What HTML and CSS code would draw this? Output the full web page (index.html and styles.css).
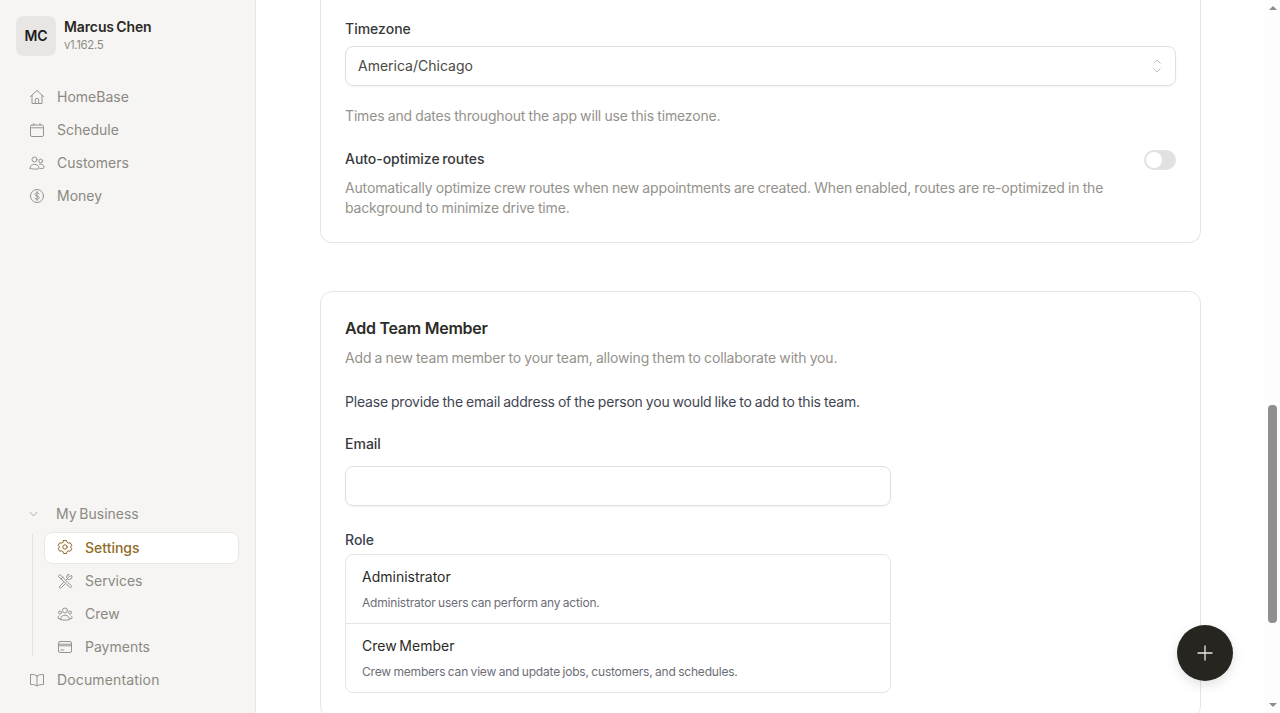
FILE: index.html
```html
<!DOCTYPE html>
<html lang="en">
<head>
<meta charset="utf-8">
<title>Settings</title>
<link rel="stylesheet" href="styles.css">
</head>
<body>
<div class="app">
  <aside class="sidebar">
    <div class="profile">
      <div class="avatar">MC</div>
      <div class="who">
        <div class="name">Marcus Chen</div>
        <div class="version">v1.162.5</div>
      </div>
    </div>
    <nav class="nav">
      <a class="item">
        <svg class="ic" viewBox="0 0 16 16"><path d="M1.5 7.5 8 1.5l6.5 6M3 6.5v8h10v-8M6.3 14.5V11a1.7 1.7 0 0 1 3.400 0v3.500"/></svg>
        <span>HomeBase</span>
      </a>
      <a class="item">
        <svg class="ic" viewBox="0 0 16 16"><rect x="1.5" y="3" width="13" height="11.5" rx="1.5"/><path d="M1.5 5.800h13M5 1.500V3M11 1.500V3"/></svg>
        <span>Schedule</span>
      </a>
      <a class="item">
        <svg class="ic" viewBox="0 0 16 16"><circle cx="5.5" cy="4.5" r="2.5"/><circle cx="11.7" cy="6" r="1.9"/><path d="M1 13.5c0-2.800 2-4.200 4.500-4.200S10 10.700 10 13.500c0 .8-9 .8-9 0ZM10.500 9.200c2.500-.5 4.500.8 4.500 3.300 0 1-1 1-4 1"/></svg>
        <span>Customers</span>
      </a>
      <a class="item">
        <svg class="ic" viewBox="0 0 16 16"><circle cx="8" cy="8" r="6.5"/><path d="M10 5.800C9.500 5 8.800 4.800 8 4.800c-1.200 0-2 .6-2 1.600 0 2.200 4.200 1 4.200 3.200 0 1-.9 1.600-2.200 1.600-.9 0-1.700-.4-2.200-1.100M8 3.500v9"/></svg>
        <span>Money</span>
      </a>
    </nav>
    <div class="spacer"></div>
    <div class="group-head">
      <svg class="chev" viewBox="0 0 10 6"><path d="M1 1l4 4 4-4"/></svg>
      <span>My Business</span>
    </div>
    <div class="sub">
      <a class="item active">
        <svg class="ic" viewBox="0 0 16 16"><path d="M6.500 1.500h3l.5 1.800 1.600.9 1.700-.4 1.500 2.500L13.500 8l1.300 1.700-1.500 2.500-1.700-.4-1.600.9-.5 1.800h-3L6 12.700l-1.600-.9-1.700.4-1.500-2.500L2.500 8 1.200 6.300l1.500-2.500 1.700.4L6 3.300Z"/><circle cx="8" cy="8" r="2.2"/></svg>
        <span>Settings</span>
      </a>
      <a class="item">
        <svg class="ic" viewBox="0 0 16 16"><path d="M1.500 3 3 1.500l11.300 11.300a1 1 0 0 1-1.500 1.500ZM4 6 6 4M9.200 6.800l3.300-3.300L14.800 2.500c.5 1.800-.2 3.500-2 4-.7.200-1.300.1-1.800-.1M9.500 4.500c-.2-1.500.8-3 2.500-3.200l-1.500 2M6.500 9.500l-3.800 3.800a1 1 0 0 0 1.500 1.500L8 11"/></svg>
        <span>Services</span>
      </a>
      <a class="item">
        <svg class="ic" viewBox="0 0 16 16"><circle cx="8" cy="4.5" r="2.5"/><circle cx="3" cy="6.5" r="1.5"/><circle cx="13" cy="6.5" r="1.5"/><path d="M3.500 13.500c0-2.800 2-4.300 4.500-4.300s4.500 1.500 4.500 4.300c-2 .9-7 .9-9 0ZM2 9.800c-1 .6-1.300 1.600-1 2.500l2 .6M14 9.800c1 .6 1.300 1.600 1 2.500l-2 .6"/></svg>
        <span>Crew</span>
      </a>
      <a class="item">
        <svg class="ic" viewBox="0 0 16 16"><rect x="1.5" y="2.5" width="13" height="11" rx="1.5"/><path d="M1.500 5.200h13M1.500 6.800h13M3.800 11h3"/></svg>
        <span>Payments</span>
      </a>
    </div>
    <a class="item item-doc">
      <svg class="ic" viewBox="0 0 16 16"><path d="M8 4c-1-1-3-1.500-6.500-1.500v10c3.500 0 5.500.5 6.500 1.500 1-1 3-1.500 6.500-1.500v-10C11 2.500 9 3 8 4ZM8 4v10"/></svg>
      <span>Documentation</span>
    </a>
  </aside>
  <main class="main">
    <section class="card card-cut">
      <label class="label label-first">Timezone</label>
      <div class="select">
        <span>America/Chicago</span>
        <svg class="updown" viewBox="0 0 10 16"><path d="M1.500 5.500 5 2l3.500 3.500M1.500 10.500 5 14l3.500-3.500"/></svg>
      </div>
      <p class="hint hint-tz">Times and dates throughout the app will use this timezone.</p>
      <div class="toggle-row">
        <span class="label label-auto">Auto-optimize routes</span>
        <span class="toggle"><span class="knob"></span></span>
      </div>
      <p class="hint hint-auto">Automatically optimize crew routes when new appointments are created. When enabled, routes are re-optimized in the background to minimize drive time.</p>
    </section>
    <section class="card card-team">
      <h2 class="title">Add Team Member</h2>
      <p class="hint hint-sub">Add a new team member to your team, allowing them to collaborate with you.</p>
      <p class="lead">Please provide the email address of the person you would like to add to this team.</p>
      <div class="narrow">
        <label class="label label-email">Email</label>
        <div class="input"></div>
        <label class="label label-role">Role</label>
        <div class="roles">
          <div class="role">
            <div class="role-name">Administrator</div>
            <div class="role-desc">Administrator users can perform any action.</div>
          </div>
          <div class="role">
            <div class="role-name">Crew Member</div>
            <div class="role-desc">Crew members can view and update jobs, customers, and schedules.</div>
          </div>
        </div>
      </div>
    </section>
  </main>
  <div class="scrollbar">
    <span class="arrow arrow-up"></span>
    <div class="track"><div class="thumb"></div></div>
    <span class="arrow arrow-down"></span>
  </div>
</div>
<button class="fab" aria-label="Add">
  <svg viewBox="0 0 16 16"><path d="M8 1v14M1 8h14"/></svg>
</button>
</body>
</html>
```

FILE: styles.css
```css
* { box-sizing: border-box; }
html, body { margin: 0; height: 100%; overflow: hidden; }
body { font-family: Inter, "Liberation Sans", sans-serif; background: #fff; color: #26251f; word-spacing: -1.2px; }
.app { display: flex; height: 713px; }

.sidebar { width: 256px; flex: none; height: 713px; background: #f6f5f3; border-right: 1px solid #e7e5e1; padding: 16px 16px 17px 16px; display: flex; flex-direction: column; }
.profile { display: flex; align-items: center; gap: 8px; margin-bottom: 24px; height: 40px; }
.avatar { width: 40px; height: 40px; border-radius: 8px; background: #e7e6e4; display: flex; align-items: center; justify-content: center; font-size: 14px; font-weight: 600; color: #1c1c1c; padding-bottom: 1px; }
.name { font-size: 14px; font-weight: 600; line-height: 20px; color: #2a2925; letter-spacing: -.12px; margin-top: -3px; word-spacing: -1px; }
.version { font-size: 11.5px; line-height: 16px; color: #8f8d86; letter-spacing: -.4px; }
.nav { display: flex; flex-direction: column; }
.item { display: flex; align-items: center; gap: 12px; height: 33px; padding-left: 13px; font-size: 14px; color: #8b8981; }
.item-doc { letter-spacing: .15px; }
.ic { width: 16px; height: 16px; flex: none; fill: none; stroke: #96948c; stroke-width: 1; stroke-linecap: round; stroke-linejoin: round; }
.spacer { flex: 1; }
.group-head { display: flex; align-items: center; gap: 18px; height: 33px; padding-left: 13px; font-size: 14px; color: #8b8981; margin-bottom: 1px; }
.chev { width: 9px; height: 6px; fill: none; stroke: #a5a39c; stroke-width: 1; }
.sub { position: relative; padding-left: 28px; width: 223px; }
.sub::before { content: ""; position: absolute; left: 16px; top: 3px; bottom: 7px; width: 1px; background: #e5e3df; }
.sub .item { width: 195px; padding-left: 13px; }
.sub .item.active { height: 32px; margin-top: 1px; padding: 0 0 2px 12px; background: #fff; border: 1px solid #e9e7e3; border-radius: 8px; color: #8f6c27; font-weight: 500; }
.item.active .ic { stroke: #8f6c27; }

.main { flex: 1; min-width: 0; height: 713px; overflow: hidden; padding: 0 64px; display: flex; flex-direction: column; gap: 48px; }
.card { border: 1px solid #e7e5e1; border-radius: 12px; padding: 24px; background: #fff; flex: none; }
.card-cut { border-top: 0; border-radius: 0 0 12px 12px; height: 243px; padding-top: 19px; }
.label { display: block; font-size: 14px; line-height: 20px; font-weight: 500; color: #38383a; }
.label-auto { padding-bottom: 2px; line-height: 18px; letter-spacing: -.04px; word-spacing: -1px; }
.select { height: 40px; margin-top: 7px; border: 1px solid #e2e0dc; border-radius: 8px; display: flex; align-items: center; justify-content: space-between; padding: 0 12px 1px; font-size: 14px; color: #4a4943; box-shadow: 0 1px 2px rgba(0,0,0,.05); }
.updown { width: 10px; height: 16px; fill: none; stroke: #c2c0bb; stroke-width: 1; margin-top: 1px; margin-right: 1px; }
.hint { margin: 0; font-size: 14px; line-height: 20px; color: #94928b; letter-spacing: -.16px; word-spacing: -.5px; }
.hint-tz { margin-top: 20px; }
.toggle-row { display: flex; justify-content: space-between; align-items: center; margin-top: 24px; height: 20px; }
.toggle { width: 32px; height: 20px; background: #e2e1df; border-radius: 10px; padding: 2px; display: block; }
.knob { display: block; width: 16px; height: 16px; background: #fff; border-radius: 50%; }
.hint-auto { margin-top: 8px; }
.card-team { padding-top: 26px; }
.title { margin: 0; font-size: 16px; line-height: 20px; font-weight: 600; color: #2d2c28; letter-spacing: -.25px; word-spacing: 0; }
.hint-sub { margin-top: 10px; }
.lead { margin: 24px 0 0; font-size: 14px; line-height: 20px; color: #414551; letter-spacing: -.2px; word-spacing: -.6px; }
.narrow { width: 546px; }
.label-email { margin-top: 22px; }
.input { height: 40px; margin-top: 12px; border: 1px solid #e2e0dc; border-radius: 8px; box-shadow: 0 1px 2px rgba(0,0,0,.05); }
.label-role { margin-top: 24px; color: #3b4152; }
.roles { margin-top: 4px; border: 1px solid #e5e5e5; border-radius: 8px; }
.role { height: 68px; padding: 12px 16px 0; }
.role + .role { border-top: 1px solid #e5e5e5; height: 69px; }
.role-name { font-size: 14px; line-height: 20px; color: #2b2a27; }
.role-desc { margin-top: 8px; font-size: 12px; line-height: 16px; color: #6b6e76; letter-spacing: -.2px; word-spacing: -.6px; }

.scrollbar { width: 15px; flex: none; background: #fdfdfd; display: flex; flex-direction: column; align-items: center; }
.arrow { flex: none; width: 0; height: 0; border-left: 4px solid transparent; border-right: 4px solid transparent; margin: 6px 0; }
.arrow-up { border-bottom: 4px solid #8c8c8c; }
.arrow-down { border-top: 4px solid #8c8c8c; }
.track { flex: 1; width: 100%; padding-top: 389px; display: flex; justify-content: center; }
.thumb { width: 9px; height: 218px; background: #8f8f8f; border-radius: 4px; }

.fab { position: fixed; left: 1177px; top: 625px; width: 56px; height: 56px; border: 0; padding: 0; border-radius: 50%; background: #26251f; box-shadow: 0 4px 12px rgba(0,0,0,.12); display: flex; align-items: center; justify-content: center; }
.fab svg { width: 16px; height: 16px; fill: none; stroke: #ebe9e5; stroke-width: 1.3; stroke-linecap: round; }
```
